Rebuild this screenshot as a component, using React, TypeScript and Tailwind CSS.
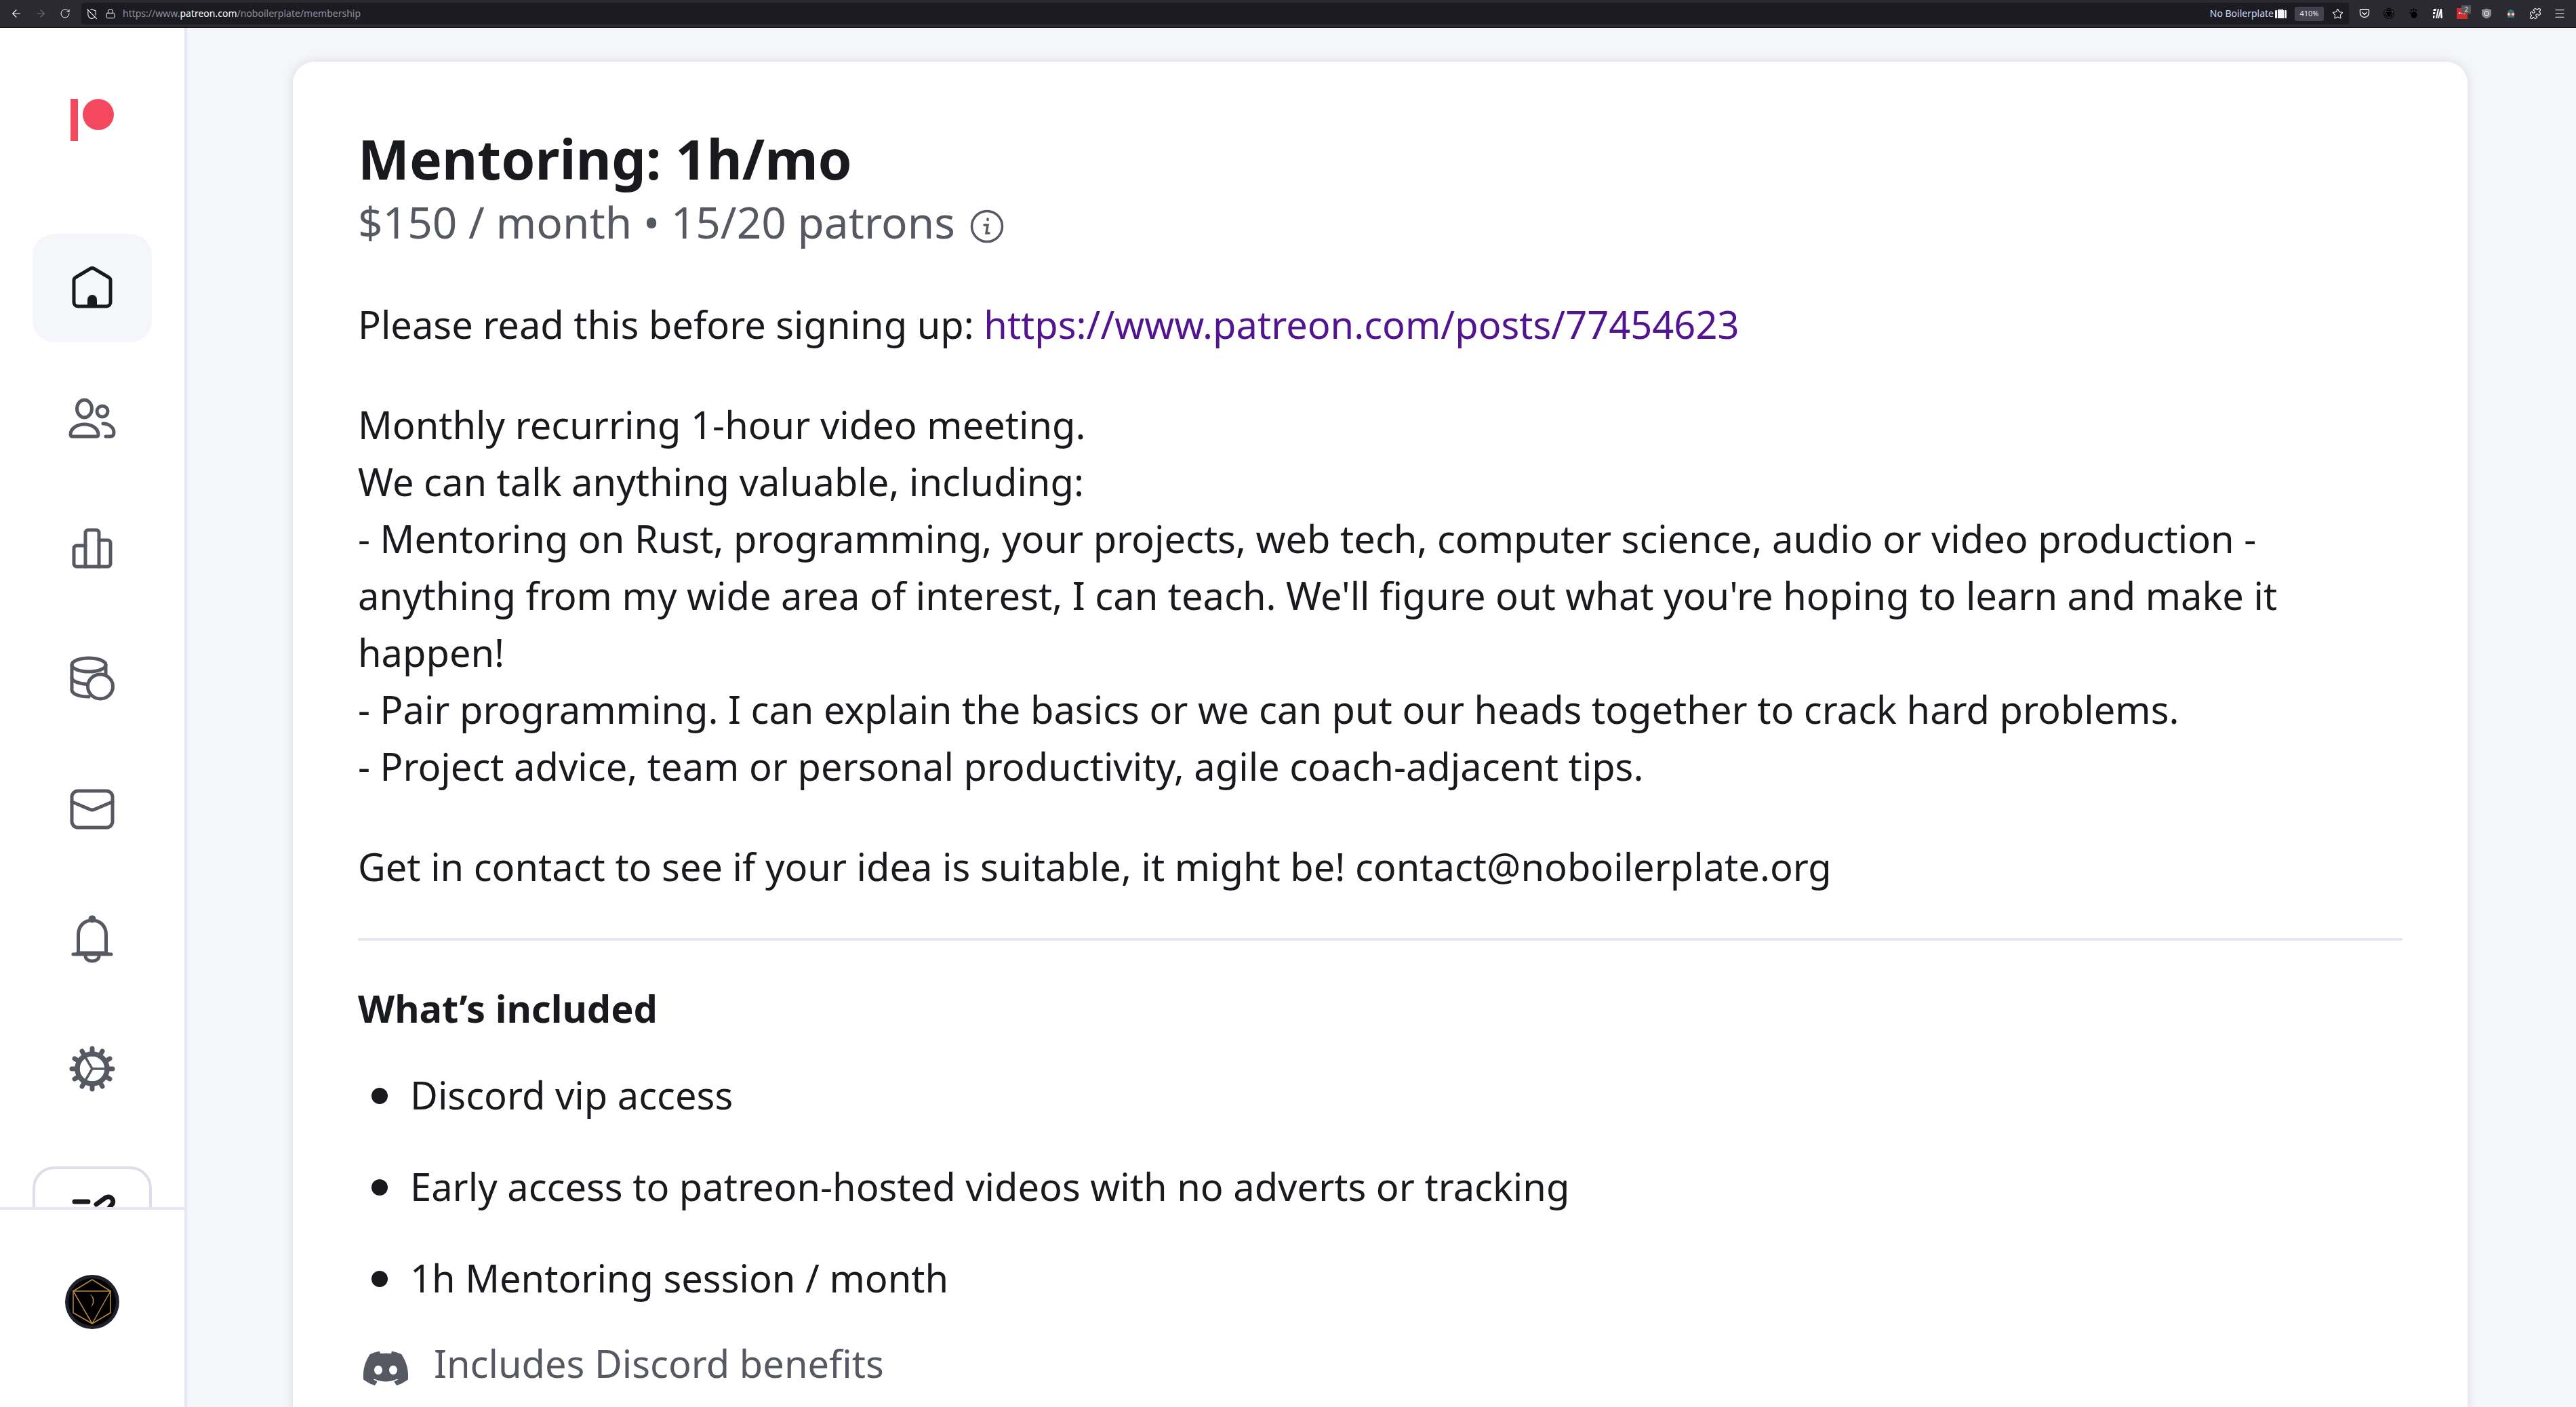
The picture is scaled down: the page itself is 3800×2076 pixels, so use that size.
import { ArrowLeft, ArrowRight, Lock, Menu, Puzzle, RotateCw, ShieldOff, Star } from "lucide-react";
import { FaDiscord } from "react-icons/fa6";

const toothAngles = [0, 30, 60, 90, 120, 150, 180, 210, 240, 270, 300, 330];

function NavIcon({ children, dark }: { children: React.ReactNode; dark?: boolean }) {
  return (
    <svg
      viewBox="0 0 80 80"
      className={dark ? "w-20 h-20 text-[#191a1e]" : "w-20 h-20 text-[#565862]"}
      fill="none"
      stroke="currentColor"
      strokeWidth="5"
      strokeLinecap="round"
      strokeLinejoin="round"
    >
      {children}
    </svg>
  );
}

function NavItem({ children, active }: { children: React.ReactNode; active?: boolean }) {
  return (
    <div className={active ? "h-40 w-44 rounded-[32px] bg-[#f5f6fa] flex items-center justify-center" : "h-40 w-44 rounded-[32px] flex items-center justify-center"}>
      {children}
    </div>
  );
}

function Tool({ children }: { children: React.ReactNode }) {
  return <div className="relative w-9 h-10 flex items-center justify-center shrink-0">{children}</div>;
}

function Perk({ children }: { children: React.ReactNode }) {
  return (
    <li className="flex items-center">
      <span className="w-6 h-6 mt-1 rounded-full bg-[#191a1e] shrink-0" />
      <span className="ml-[33px]">{children}</span>
    </li>
  );
}

function TopBar() {
  return (
    <div className="h-[41px] shrink-0 bg-[#2b2a33] border-b border-black flex items-center px-1.5 text-[14px] font-['Noto_Sans',sans-serif]">
      <Tool><ArrowLeft size={18} color="#fbfbfe" strokeWidth={1.5} /></Tool>
      <Tool><ArrowRight size={18} color="#6f6e77" strokeWidth={1.5} /></Tool>
      <Tool><RotateCw size={16} color="#fbfbfe" strokeWidth={1.5} /></Tool>
      <div className="ml-1.5 h-8 flex-1 rounded-[4px] bg-[#1c1b22] flex items-center pl-[7px] pr-2">
        <ShieldOff size={17} color="#fbfbfe" strokeWidth={1.5} />
        <Lock size={16} color="#fbfbfe" strokeWidth={1.5} className="ml-[11px]" />
        <div className="ml-[10px] text-[#8f8f9d] whitespace-nowrap leading-none">
          https://www.<span className="text-[#fbfbfe]">patreon.com</span>/noboilerplate/membership
        </div>
        <div className="ml-auto text-[#c9d8f5] whitespace-nowrap leading-none">No Boilerplate</div>
        <svg viewBox="0 0 17 16" className="ml-[2px] w-[17px] h-4" fill="#f4f4f6">
          <path d="M5 3V1.500h7V3H11V2.500H6V3z" />
          <rect x="0" y="3" width="3" height="12" rx="1" />
          <rect x="4" y="3" width="9" height="12" />
          <rect x="14" y="3" width="3" height="12" rx="1" />
        </svg>
        <div className="ml-3 h-[21px] w-[43px] rounded-[3px] bg-[#43424f] text-[#e4e4ea] text-[11px] flex items-center justify-center">410%</div>
        <Star size={17} color="#fbfbfe" strokeWidth={1.5} className="ml-3" />
      </div>
      <div className="ml-[5px] flex">
        <Tool>
          <svg viewBox="0 0 16 16" className="w-4 h-4" fill="none" stroke="#fbfbfe" strokeWidth="1.3" strokeLinecap="round" strokeLinejoin="round">
            <path d="M2.500 2h11a1 1 0 0 1 1 1v4a6.500 6.500 0 0 1-13 0V3a1 1 0 0 1 1-1z" />
            <path d="M5 6.500l3 3 3-3" />
          </svg>
        </Tool>
        <Tool>
          <svg viewBox="0 0 16 16" className="w-4 h-4" fill="none" stroke="#55545c" strokeWidth="0.7">
            <circle cx="8" cy="8" r="8" fill="#000" stroke="none" />
            <path d="M8 1l6 3.500v7L8 15l-6-3.500v-7zM2 4.500h12L8 15z" />
          </svg>
        </Tool>
        <Tool>
          <svg viewBox="0 0 16 16" className="w-4 h-4" fill="#000">
            <ellipse cx="9" cy="10" rx="4.500" ry="5" />
            <circle cx="5" cy="3" r="1.300" />
            <circle cx="8.500" cy="2" r="1.400" />
            <circle cx="12" cy="3" r="1.200" />
            <circle cx="3.500" cy="7" r="1.200" />
          </svg>
        </Tool>
        <Tool>
          <svg viewBox="0 0 16 16" className="w-4 h-4" fill="#fbfbfe">
            <path d="M2 1h4l-.6 3H1.400zM8 1h2L7 15H5zM12 1h2l1 14h-2.500l-.6-8-1.900 8H8zM1 6h3.600L4 9H1zM1 11h2.600L3 15H1z" />
          </svg>
        </Tool>
        <Tool>
          <div className="w-4 h-4 rounded-[1px] bg-[#d32b2b] flex items-center justify-center text-white text-[8px] font-bold tracking-[0.5px] leading-none">•••</div>
          <div className="absolute top-[8px] left-[17px] w-[14px] h-[12px] bg-[#5a5a5e] text-[#e8e8e8] text-[10px] leading-[12px] text-center">2</div>
        </Tool>
        <Tool>
          <svg viewBox="0 0 16 16" className="w-4 h-4">
            <path d="M8 0.500l7 2v6c0 3.500-3.500 6-7 7-3.500-1-7-3.500-7-7v-6z" fill="#8a8a8e" />
            <circle cx="8" cy="8" r="3" fill="none" stroke="#fff" strokeWidth="1" />
          </svg>
        </Tool>
        <Tool>
          <svg viewBox="0 0 16 16" className="w-4 h-4">
            <path d="M3 7a5 5 0 0 1 10 0v7H3z" fill="#2f6f80" />
            <circle cx="5" cy="9" r="2.300" fill="#f0d9c8" stroke="#c94a3a" strokeWidth="0.8" />
            <circle cx="11" cy="9" r="2.300" fill="#f0d9c8" stroke="#c94a3a" strokeWidth="0.8" />
          </svg>
        </Tool>
        <Tool><Puzzle size={18} color="#fbfbfe" strokeWidth={1.5} /></Tool>
        <Tool><Menu size={18} color="#fbfbfe" strokeWidth={1.5} /></Tool>
      </div>
    </div>
  );
}

function Sidebar() {
  return (
    <aside className="w-[276px] shrink-0 bg-white border-r-4 border-[#e5e8f2] flex flex-col h-full">
      <div className="h-[1740px] shrink-0 overflow-hidden flex flex-col items-center">
        <svg viewBox="0 0 64 62" className="mt-[105px] w-16 h-[62px] shrink-0">
          <rect x="0" y="0" width="11" height="62" fill="#f4485e" />
          <circle cx="41" cy="23" r="23" fill="#f4485e" />
        </svg>
        <div className="mt-[137px] flex flex-col gap-8">
          <NavItem active>
            <NavIcon dark>
              <path d="M37 11.500a6 6 0 0 1 6 0L64 24a5 5 0 0 1 3 4.500V61a6 6 0 0 1-6 6H19a6 6 0 0 1-6-6V28.500a5 5 0 0 1 3-4.500z" />
              <path d="M33 67V57a7 7 0 0 1 14 0v10z" fill="currentColor" stroke="none" />
            </NavIcon>
          </NavItem>
          <NavItem>
            <NavIcon>
              <ellipse cx="28.500" cy="26" rx="11" ry="13" />
              <circle cx="55" cy="30" r="8" />
              <path d="M8 64c0-9 10-15 20.500-15S49 55 49 64q0 3-3 3H11q-3 0-3-3z" />
              <path d="M56 48c9 0 16 6 16 13q0 6-5 6h-7" />
            </NavIcon>
          </NavItem>
          <NavItem>
            <NavIcon>
              <path d="M30 36H17a4 4 0 0 0-4 4v23a4 4 0 0 0 4 4h46a4 4 0 0 0 4-4V32a4 4 0 0 0-4-4H50" />
              <path d="M30 67V17a4 4 0 0 1 4-4h12a4 4 0 0 1 4 4v50" />
            </NavIcon>
          </NavItem>
          <NavItem>
            <NavIcon>
              <ellipse cx="35" cy="20" rx="25" ry="10" />
              <path d="M10 20v37c0 6 11 10 25 10" />
              <path d="M10 39c0 5 10 9 23 9.500" />
              <path d="M60 20v14" />
              <ellipse cx="52" cy="52" rx="18.500" ry="18" fill="#fff" />
            </NavIcon>
          </NavItem>
          <NavItem>
            <NavIcon>
              <rect x="10" y="14" width="60" height="54" rx="9" />
              <path d="M10 30l26 11q4 2 8 0l26-11" />
            </NavIcon>
          </NavItem>
          <NavItem>
            <NavIcon>
              <path d="M19.500 62V34c0-13 9-21 20.500-21s20.500 8 20.500 21v28" />
              <path d="M12 63q6 0 7.500-2h41q1.500 2 7.500 2z" />
              <path d="M30 66a10 7 0 0 0 20 0" />
              <circle cx="40" cy="11" r="3" fill="currentColor" />
            </NavIcon>
          </NavItem>
          <NavItem>
            <NavIcon>
              {toothAngles.map((a) => (
                <path key={a} d="M40 10v8" strokeWidth="7" transform={`rotate(${a} 40 40)`} />
              ))}
              <circle cx="40" cy="40" r="22" strokeWidth="7.500" />
              <path d="M40 40h20M40 40L30 23M40 40L30 57" strokeWidth="3.500" />
            </NavIcon>
          </NavItem>
        </div>
        <div className="mt-16 w-44 h-40 shrink-0 rounded-[32px] border-4 border-[#dcdfea] flex justify-center pt-9">
          <svg viewBox="0 0 80 80" className="w-20 h-20" fill="none" stroke="#191a1e" strokeWidth="7" strokeLinecap="round">
            <path d="M14 12h20" />
            <path d="M46 16l14-10a7 7 0 0 1 10 9L58 30" />
          </svg>
        </div>
      </div>
      <div className="flex-1 border-t-4 border-[#e5e8f2] flex justify-center pt-24">
        <svg viewBox="0 0 80 80" className="w-20 h-20" fill="none" stroke="#b88a3e" strokeWidth="1.500" strokeLinejoin="round">
          <circle cx="40" cy="40" r="40" fill="#20212b" stroke="none" />
          <circle cx="40" cy="40" r="35" fill="#000" stroke="none" />
          <path d="M40 7l27 17v32L40 72 12 56V24z" />
          <path d="M12 24h55L40 72z" />
          <path d="M36 28c5 4 7 12 2 20 7-6 6-16-2-20z" fill="#b88a3e" stroke="none" />
        </svg>
      </div>
    </aside>
  );
}

export default function App() {
  return (
    <div className="w-[3800px] h-[2076px] overflow-hidden flex flex-col font-['Noto_Sans',sans-serif] bg-[#f5f6fa]">
      <TopBar />
      <div className="flex-1 min-h-0 flex">
        <Sidebar />
        <main className="flex-1 min-w-0 overflow-hidden pl-[156px] pr-[160px] pt-[50px]">
          <div className="bg-white rounded-[32px] shadow-[0_0_16px_rgba(25,26,30,0.12)] px-24 pt-[92px] pb-24 text-[#191a1e] text-[56px] leading-[84px]">
            <h1 className="text-[80.5px] font-bold leading-[102px]">Mentoring: 1h/mo</h1>
            <div className="mt-[2px] text-[64px] leading-[82px] text-[#565862] flex items-center">
              <span>$150 / month • 15/20 patrons</span>
              <svg viewBox="0 0 50 50" className="ml-[22px] mt-[12px] w-[50px] h-[50px]" fill="none" stroke="#565862" strokeWidth="3.500" strokeLinecap="round">
                <circle cx="25" cy="25" r="22.500" />
                <path d="M26 14v1.500M21 23h5l-2 12h4" />
              </svg>
            </div>
            <p className="mt-[67px]">
              Please read this before signing up: <a className="text-[#52148f]">https://www.patreon.com/posts/77454623</a>
            </p>
            <p className="mt-[64px]">
              Monthly recurring 1-hour video meeting.<br />
              We can talk anything valuable, including:<br />
              - Mentoring on Rust, programming, your projects, web tech, computer science, audio or video production - anything from my wide area of interest, I can teach. We'll figure out what you're hoping to learn and make it happen!<br />
              - Pair programming. I can explain the basics or we can put our heads together to crack hard problems.<br />
              - Project advice, team or personal productivity, agile coach-adjacent tips.
            </p>
            <p className="mt-[64px]">Get in contact to see if your idea is suitable, it might be! contact@noboilerplate.org</p>
            <div className="mt-[64px] h-1 bg-[#e5e8f2]" />
            <h2 className="mt-[57px] font-bold">What’s included</h2>
            <ul className="mt-[44px] flex flex-col gap-[51px] pl-5">
              <Perk>Discord vip access</Perk>
              <Perk>Early access to patreon-hosted videos with no adverts or tracking</Perk>
              <Perk>1h Mentoring session / month</Perk>
            </ul>
            <div className="mt-[42px] flex items-start text-[#565862]">
              <FaDiscord className="ml-[5px] w-[72px] h-[72px] mt-[14px]" />
              <span className="ml-[35px]">Includes Discord benefits</span>
            </div>
          </div>
        </main>
      </div>
    </div>
  );
}
